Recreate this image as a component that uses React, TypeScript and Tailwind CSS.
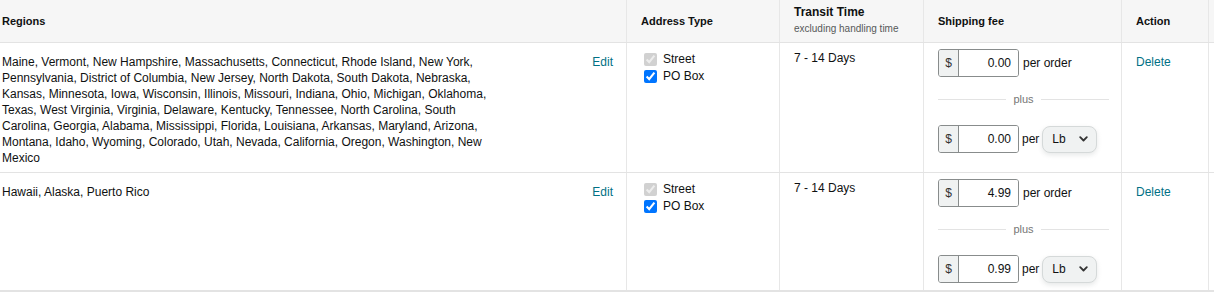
import React from "react";

const LINK = "text-[#007185]";

interface Rule {
  regions: string;
  perOrder: string;
  perUnit: string;
}

// line breaks kept as they wrap in the original column
const rules: Rule[] = [
  {
    regions:
      "Maine, Vermont, New Hampshire, Massachusetts, Connecticut, Rhode Island, New York,\nPennsylvania, District of Columbia, New Jersey, North Dakota, South Dakota, Nebraska,\nKansas, Minnesota, Iowa, Wisconsin, Illinois, Missouri, Indiana, Ohio, Michigan, Oklahoma,\nTexas, West Virginia, Virginia, Delaware, Kentucky, Tennessee, North Carolina, South\nCarolina, Georgia, Alabama, Mississippi, Florida, Louisiana, Arkansas, Maryland, Arizona,\nMontana, Idaho, Wyoming, Colorado, Utah, Nevada, California, Oregon, Washington, New\nMexico",
    perOrder: "0.00",
    perUnit: "0.00",
  },
  { regions: "Hawaii, Alaska, Puerto Rico", perOrder: "4.99", perUnit: "0.99" },
];

const cols = "grid grid-cols-[626px_153px_144px_198px_87px_1fr]";

function MoneyInput({ value }: { value: string }) {
  return (
    <div className="flex h-[28px] w-[81px] rounded-[3px] border border-[#888c8c] overflow-hidden">
      <div className="w-[20px] flex items-center justify-center bg-[#f0f2f2] border-r border-[#888c8c] text-[12px] text-[#333]">
        $
      </div>
      <div className="flex-1 flex items-center justify-end pr-[7px] bg-white text-[12px]">{value}</div>
    </div>
  );
}

function Chevron() {
  return (
    <svg width="9" height="6" viewBox="0 0 9 6" className="text-[#333]">
      <path d="M1.2 1.2l3.3 3.3 3.3-3.3" fill="none" stroke="currentColor" strokeWidth="1.8" strokeLinecap="round" strokeLinejoin="round" />
    </svg>
  );
}

function RuleRow({ rule }: { rule: Rule }) {
  return (
    <div className={`${cols} border-b border-[#e3e3e3] last:border-b-2`}>
      {/* regions */}
      <div className="flex pt-[11px] pb-[6px]">
        <div className="w-[500px] pl-[2px] leading-[16px] whitespace-pre-line">{rule.regions}</div>
        <a className={`ml-auto pr-[13px] leading-[16px] ${LINK}`}>Edit</a>
      </div>

      {/* address type */}
      <div className="border-l border-[#e7e7e7] pt-[10px] pl-[17px] flex flex-col gap-[4px]">
        <label className="flex items-center gap-[6px] leading-[13px]">
          <input type="checkbox" defaultChecked disabled className="w-[13px] h-[13px]" />
          <span>Street</span>
        </label>
        <label className="flex items-center gap-[6px] leading-[13px]">
          <input type="checkbox" defaultChecked className="w-[13px] h-[13px]" />
          <span>PO Box</span>
        </label>
      </div>

      {/* transit */}
      <div className="border-l border-[#e7e7e7] pt-[7px] pl-[14px] leading-[16px]">7 - 14 Days</div>

      {/* shipping fee */}
      <div className="border-l border-[#e7e7e7] pt-[6px] pb-[7px] pl-[14px]">
        <div className="flex items-center gap-[4px]">
          <MoneyInput value={rule.perOrder} />
          <span>per order</span>
        </div>
        <div className="mt-[14px] h-[16px] w-[171px] flex items-center gap-[7px] text-[11px] text-[#767676]">
          <div className="flex-1 border-t border-[#e3e3e3]" />
          <span>plus</span>
          <div className="flex-1 border-t border-[#e3e3e3]" />
        </div>
        <div className="mt-[18px] flex items-center gap-[3px]">
          <MoneyInput value={rule.perUnit} />
          <span>per</span>
          <div className="h-[27px] w-[55px] flex items-center justify-between pl-[9px] pr-[8px] rounded-[8px] border border-[#d5d9d9] bg-[#f0f2f2] shadow-[0_2px_5px_rgba(213,217,217,0.6)]">
            <span>Lb</span>
            <Chevron />
          </div>
        </div>
      </div>

      {/* action */}
      <div className="border-l border-[#e7e7e7] pt-[11px] pl-[14px] leading-[16px]">
        <a className={LINK}>Delete</a>
      </div>

      <div className="border-l border-[#e7e7e7]" />
    </div>
  );
}

export default function App() {
  return (
    <div className="w-[1214px] h-[298px] bg-white text-[12px] text-[#0f1111] font-['Liberation_Sans',Arial,sans-serif]">
      <div className={`${cols} h-[43px] bg-[#f6f6f6] border-b border-[#e3e3e3] text-[11px] font-bold`}>
        <div className="flex items-center pl-[2px]">Regions</div>
        <div className="flex items-center pl-[14px] border-l border-[#e7e7e7]">Address Type</div>
        <div className="flex flex-col justify-center pl-[14px] border-l border-[#e7e7e7] pb-[2px]">
          <span className="leading-[14px] text-[12px]">Transit Time</span>
          <span className="mt-[4px] leading-[12px] text-[10px] font-normal text-[#565959]">excluding handling time</span>
        </div>
        <div className="flex items-center pl-[14px] border-l border-[#e7e7e7]">Shipping fee</div>
        <div className="flex items-center pl-[14px] border-l border-[#e7e7e7]">Action</div>
        <div className="border-l border-[#e7e7e7]" />
      </div>
      {rules.map((r, i) => (
        <RuleRow key={i} rule={r} />
      ))}
    </div>
  );
}
